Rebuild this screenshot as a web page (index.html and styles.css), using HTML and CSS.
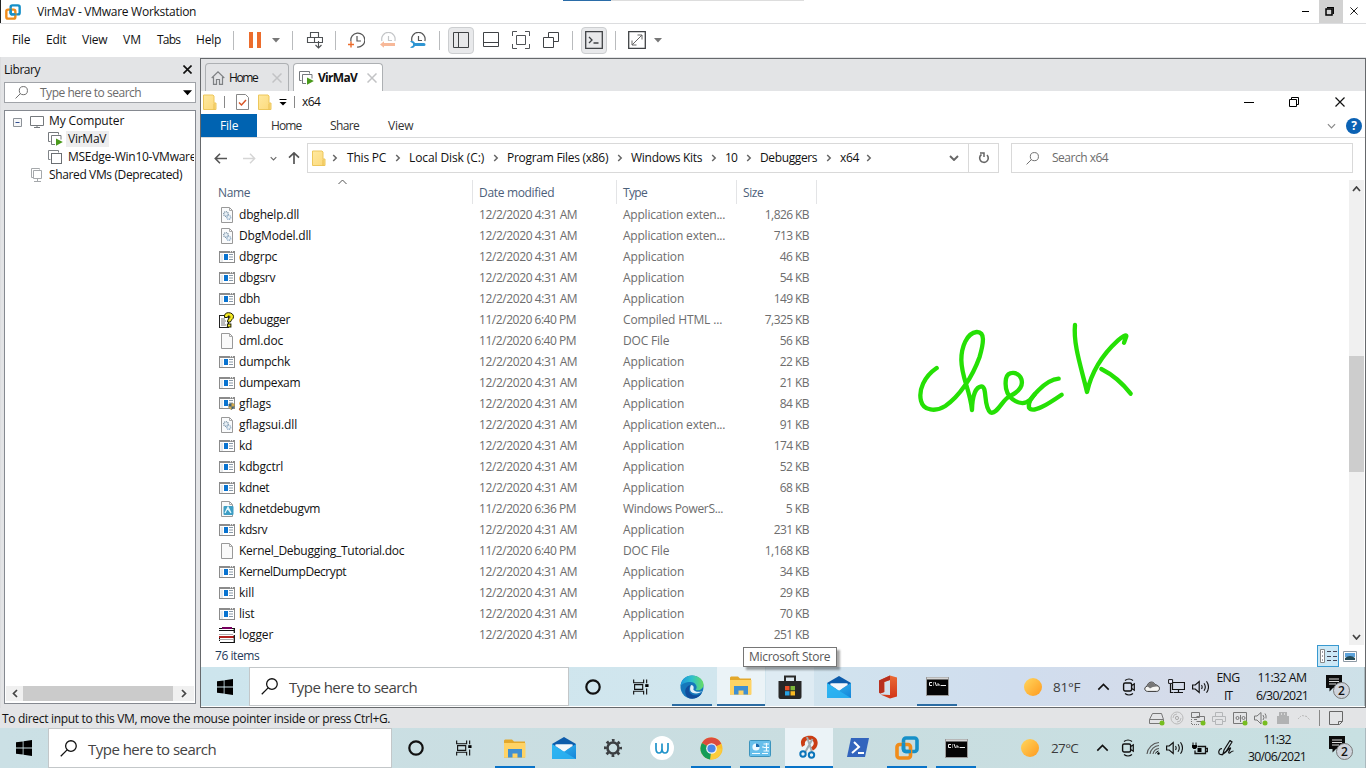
FILE: index.html
```html
<!DOCTYPE html>
<html lang="en">
<head>
<meta charset="utf-8">
<title>VirMaV - VMware Workstation</title>
<link rel="stylesheet" href="styles.css">
</head>
<body>
<svg class="sprite" width="0" height="0">
<defs>
<linearGradient id="gSun" x1="0" y1="0" x2="1" y2="1"><stop offset="0" stop-color="#ffd75e"/><stop offset="1" stop-color="#ff9a1f"/></linearGradient>
<linearGradient id="gFolder" x1="0" y1="0" x2="1" y2="1"><stop offset="0" stop-color="#ffe9a0"/><stop offset="1" stop-color="#fcd97a"/></linearGradient>
<linearGradient id="gEdge" x1="0" y1="0" x2="1" y2="0"><stop offset="0" stop-color="#1c95dc"/><stop offset=".5" stop-color="#2fc1c9"/><stop offset="1" stop-color="#68dd62"/></linearGradient>
<linearGradient id="gOff" x1="0" y1="0" x2="0" y2="1"><stop offset="0" stop-color="#ea6a35"/><stop offset="1" stop-color="#d23517"/></linearGradient>
<linearGradient id="gMail" x1="0" y1="0" x2="1" y2="1"><stop offset="0" stop-color="#34bff3"/><stop offset="1" stop-color="#1683d8"/></linearGradient>
</defs>
<symbol id="vmware" viewBox="0 0 24 24"><rect x="8.500" y="2" width="13.500" height="13.500" rx="2.500" fill="none" stroke="#1690c8" stroke-width="3.600"/><rect x="2" y="8.500" width="13.500" height="13.500" rx="2.500" fill="none" stroke="#f08c1a" stroke-width="3.600"/><path d="M8.500 7v6a2.500 2.500 0 0 0 2.500 2.500h5" fill="none" stroke="#1690c8" stroke-width="3.600"/></symbol>
<symbol id="caret" viewBox="0 0 8 5"><path d="M0 0h8L4 4.500z" fill="currentColor"/></symbol>
<symbol id="x" viewBox="0 0 10 10"><path d="M.5.5l9 9M9.500.5l-9 9" fill="none" stroke="currentColor" stroke-width="var(--s,1.200)"/></symbol>
<symbol id="chev" viewBox="0 0 6 8"><path d="M1.200 1l3 3-3 3" fill="none" stroke="#666" stroke-width="1.500"/></symbol>
<symbol id="down" viewBox="0 0 10 6"><path d="M1 1l4 4 4-4" fill="none" stroke="currentColor" stroke-width="var(--s,1.500)"/></symbol>
<symbol id="mag" viewBox="0 0 16 16"><circle cx="10.300" cy="5.700" r="5" fill="none" stroke="currentColor" stroke-width="1.200"/><path d="M6.700 9.300L.7 15.300" stroke="currentColor" stroke-width="1.200"/></symbol>
<symbol id="folder" viewBox="0 0 14 16"><path d="M.5 1h9.500l1 1v7h2v6.500H.5z" fill="url(#gFolder)" stroke="#edc75c"/><path d="M11 9.500v6" stroke="#e8bd4c"/></symbol>
<symbol id="vmstack" viewBox="0 0 15 14"><path d="M2.500 9.500h-2v-9h10v2" fill="none" stroke="#808488"/><rect x="3.500" y="3.500" width="10" height="10" fill="#fff" stroke="#6b6f73"/></symbol>
<symbol id="vmrun" viewBox="0 0 15 14"><path d="M2.500 9.500h-2v-9h10v2M7 12.500H3.500v-9h9.500v4" fill="none" stroke="#75797d"/><path d="M8 6.500l6.800 3.600L8 13.800z" fill="#4a9a1c"/></symbol>
<symbol id="clock" viewBox="0 0 17 17"><path d="M3 9.500A7 7 0 1 1 9 15" fill="none" stroke="currentColor" stroke-width="1.200"/><path d="M9 4v5h4" fill="none" stroke="currentColor" stroke-width="1.200"/></symbol>
<symbol id="halfclock" viewBox="0 0 17 17"><path d="M2 9A6.700 6.700 0 1 1 14.800 9" fill="none" stroke="currentColor" stroke-width="1.200"/><path d="M8.500 4v4.500h3.500" fill="none" stroke="currentColor" stroke-width="1.200"/></symbol>
<symbol id="dll" viewBox="0 0 12 16"><path d="M.5.5h8l3 3v12H.5z" fill="#fafbfc" stroke="#999"/><path d="M8.500.5v3h3" fill="none" stroke="#aaa"/><circle cx="5" cy="7" r="2.300" fill="#e8f0f6" stroke="#8298aa" stroke-width="1.300" stroke-dasharray="1 .6"/><circle cx="7.800" cy="10.300" r="2" fill="#e8f0f6" stroke="#8aa8c4" stroke-width="1.300" stroke-dasharray="1 .6"/></symbol>
<symbol id="doc" viewBox="0 0 12 16"><path d="M.5.5h8l3 3v12H.5z" fill="#fafafa" stroke="#999"/><path d="M8.500.5v3h3" fill="none" stroke="#aaa"/></symbol>
<symbol id="app" viewBox="0 0 16 12"><rect x=".5" y=".5" width="15" height="11" fill="#fff" stroke="#8b8b8b"/><path d="M0 1h16" stroke="#8b8b8b" stroke-width="2"/><path d="M11 .7h1m1 0h1" stroke="#fff"/><path d="M1.500 3h2.500v8H1.500z" fill="#e4e8eb"/><path d="M5 3h4v6H5z" fill="#0873d0"/><path d="M10 3.500h4M10 6h4M10 8.500h4" stroke="#8b9aa8"/></symbol>
<symbol id="flags" viewBox="0 0 16 13"><use href="#app" width="16" height="12"/><path d="M9.500 7l3-1 3 1v3l-3 3-3-2.500z" fill="#3f6276"/><path d="M12.500 6l3 1v2.500h-3zM9.500 9.500h3V13L10 11z" fill="#d6aa4c"/></symbol>
<symbol id="ps1" viewBox="0 0 14 16"><path d="M1.500.5h8l3 3v12h-11z" fill="#fafafa" stroke="#999"/><path d="M9.500.5v3h3" fill="none" stroke="#aaa"/><rect x="3.500" y="5" width="10" height="9" rx="1" fill="#3e9ec4"/><path d="M5 12l3-6 3 6M7 7l4 5" fill="none" stroke="#e3f8ff" stroke-width="1.200"/></symbol>
<symbol id="chm" viewBox="0 0 16 16"><rect x=".5" y="3.500" width="9" height="12" fill="#fff" stroke="#222"/><path d="M2 7h4M2 9h5M2 11h4M2 13h5" stroke="#777"/><path d="M5.500 5.500C5 2 7 .7 9.500.7c3 0 5 1.600 5 4 0 3-3 3-3 5.300H8.400c0-3.300 2.600-3.600 2.600-5 0-1.500-2.600-1.500-2.600.5z" fill="#f5ea24" stroke="#1c1c00"/><rect x="8.400" y="12" width="3.500" height="3" fill="#f5ea24" stroke="#1c1c00"/></symbol>
<symbol id="log" viewBox="0 0 16 16"><path d="M1 2h14v13H1z" fill="#fff"/><path d="M0 1.500h3M13 1.500h3M0 13.500h1M0 3.500h15M0 11.500h1M1 15.500h14" stroke="#111"/><path d="M3 1h10" stroke="#780060" stroke-width="2"/><path d="M0 10h15" stroke="#b3201c" stroke-width="2"/><path d="M15.300 1v5M15.300 8v8" stroke="#111" stroke-width="1.300"/><path d="M0 7.500h14M0 12.500h14" stroke="#aaa"/></symbol>
<symbol id="win" viewBox="0 0 16 16"><path d="M0 2.300l6.700-.9v6.200H0zM7.500 1.300L16 .1v7.500H7.500zM0 8.400h6.700v6.200L0 13.700zM7.500 8.400H16v7.500l-8.500-1.200z" fill="#000"/></symbol>
<symbol id="ring" viewBox="0 0 16 16"><circle cx="8" cy="8" r="6.700" fill="none" stroke="#111" stroke-width="2.200"/></symbol>
<symbol id="tview" viewBox="0 0 17 16"><path d="M.7 0v3.500h10.600V0M.7 16v-3.500h10.600V16M1.700 5.500h8.600v5H1.700zM14.500 0v4M14.500 9.500V16" fill="none" stroke="#111" stroke-width="1.200"/><path d="M13 5h3.500v3H13z"/></symbol>
<symbol id="edge" viewBox="0 0 24 24"><circle cx="12" cy="12" r="11.500" fill="#1677ba"/><path d="M.6 11C1 4.500 6 .5 12 .5c7 0 12 5 11.500 9.500-.4 4-4 6-8 5 3-3 0-8-5-8C5.500 7 2 9 .6 11z" fill="url(#gEdge)"/><path d="M11 10c-5 5 0 12 7 10 1.500-.5 3-1.200 3.800-2-3 5.500-9.500 6.500-13 5C3.500 20 4 11 11 10z" fill="#104d9c"/><path d="M11 10c3 0 3 3 2.300 4.500 1.500 2.500 6 3 9 1.500-3 3.500-11 3-12-.5-.5-2 0-4 .7-5.500z" fill="#e3f0f8"/></symbol>
<symbol id="explorer" viewBox="0 0 22 19"><path d="M0 1.500L1 .5h7l2 2h11v16H0z" fill="#e3a82b"/><path d="M0 4h21.500v14.500H0z" fill="#ffd364"/><path d="M4 18.500V10h14v8.500h-4.500v-4h-5v4z" fill="#3f8fd2"/></symbol>
<symbol id="store" viewBox="0 0 24 24"><path d="M7 7V1.500h10V7" fill="none" stroke="#2a2a2a" stroke-width="2"/><path d="M.5 6h23v16a2 2 0 0 1-2 2h-19a2 2 0 0 1-2-2z" fill="#272727"/><path d="M7 11h4.500v4.300H7z" fill="#e74f28"/><path d="M12.500 11H17v4.300h-4.500z" fill="#7db73a"/><path d="M7 16.200h4.500v4.300H7z" fill="#28a1e2"/><path d="M12.500 16.200H17v4.300h-4.500z" fill="#f8b923"/></symbol>
<symbol id="mail" viewBox="0 0 24 22"><path d="M0 7L12 0l12 7v6H0z" fill="#0d5cab"/><path d="M3 7.500h18L12 15z" fill="#f4f8fc"/><path d="M0 7l12 7.500L24 7v15H0z" fill="url(#gMail)"/><path d="M3 8.800L4.500 7.500h15L21 8.800l-9 5.700z" fill="#f4f8fc"/><path d="M0 22V7.500L24 22z" fill="#2db4f2" opacity=".8"/></symbol>
<symbol id="office" viewBox="0 0 20 24"><path d="M1 5.500L12 .5l7 2v19l-7 2L2.500 19.500 12 20V5L6.500 7v10L2.500 18.500 1 17z" fill="url(#gOff)"/><path d="M1 5.500L12 .5V5L6 7v10l-4 1.500-1-1z" fill="#b8301f"/></symbol>
<symbol id="cmd" viewBox="0 0 23 19"><rect x=".5" y=".5" width="22" height="18" fill="#050505" stroke="#999"/><path d="M1 1.500h21" stroke="#d5d5d5" stroke-width="2"/><path d="M6 5.500H3.500v3H6M7.500 5.500v1m0 1v1M9 5l1.500 4M12 9V6.500l2 2V9M15 8.500h5" fill="none" stroke="#eee"/></symbol>
<symbol id="sun" viewBox="0 0 18 18"><circle cx="9" cy="9" r="9" fill="url(#gSun)"/></symbol>
<symbol id="meet" viewBox="0 0 14 18"><path d="M3 2.500q4-3 8 0M3 15.500q4 3 8 0" fill="none" stroke="#111" stroke-width="1.200"/><rect x="1.600" y="5" width="8" height="8" rx="1.500" fill="none" stroke="#111" stroke-width="1.400"/><path d="M9.600 7.500l2.700-1.600v6.200l-2.700-1.600" fill="none" stroke="#111" stroke-width="1.200"/></symbol>
<symbol id="cloud" viewBox="0 0 16 11"><path d="M3.500 10.400C0 10 0 6 3 5.200 4 0 10 0 11 3.700c3 .3 5 2.300 4.300 4.700-.5 1.500-1.500 2-3 2z" fill="#f6f6f4" stroke="#333"/><path d="M1 6c2-1.500 4 0 5 1.500C8 6 12 5 14.500 6 14 4 12 3.800 11 3.700 9.500.5 4.500.5 3 5.200z" fill="#777"/></symbol>
<symbol id="net" viewBox="0 0 17 15"><path d="M4.500 3.500h12v7h-12zM10.500 10.500v3M6 13.500h9M2.500 5v8.500h3" fill="none" stroke="#111" stroke-width="1.200"/><path d="M.6.6h4v3.800h-4z" fill="#eef" stroke="#111"/></symbol>
<symbol id="vol" viewBox="0 0 17 14"><path d="M.6 5v4h2.600l4 3.500v-11L3.200 5z" fill="none" stroke="#111" stroke-width="1.200"/><path d="M9.500 5q1.300 2 0 4M12 3.200q2.600 3.800 0 7.600M14.500 1.200q4 5.800 0 11.600" fill="none" stroke="#111" stroke-width="1.100"/></symbol>
<symbol id="note" viewBox="0 0 24 24"><path d="M0 0h16v13H7l-3.500 3.500V13H0z" fill="#0b0b0b"/><path d="M3 4h10M3 6.500h10M3 9h7" stroke="#ddd"/><circle cx="15.500" cy="15.500" r="8" fill="#cfd4dc" stroke="#777"/></symbol>
<symbol id="gear" viewBox="0 0 20 20"><circle cx="10" cy="10" r="5.500" fill="none" stroke="#3c3f42" stroke-width="2.600"/><circle cx="10" cy="10" r="7.600" fill="none" stroke="#3c3f42" stroke-width="2.800" stroke-dasharray="2.700 3.270" stroke-dashoffset="1.350"/></symbol>
<symbol id="wcircle" viewBox="0 0 24 24"><circle cx="12" cy="12" r="12" fill="#fff"/><path d="M6 7v5.500Q6 17 9 17t3-4.500V7.500M12 12.500Q12 17 15 17t3-4.500V7" fill="none" stroke="#2093c9" stroke-width="1.700"/></symbol>
<symbol id="chrome" viewBox="0 0 24 24"><circle cx="12" cy="12" r="11.500" fill="#fbc02d"/><path d="M12 12L2 6.200A11.500 11.500 0 0 1 22.200 7z" fill="#dd4b3e"/><path d="M12 12L2 6.200A11.500 11.500 0 0 0 10.500 23.400L16 15z" fill="#159c58"/><path d="M12 12h10.800a11.500 11.500 0 0 1-12.300 11.400z" fill="#fbcc3c"/><circle cx="12" cy="12" r="5.600" fill="#f2f5f7"/><circle cx="12" cy="12" r="4.300" fill="#4a86e8"/></symbol>
<symbol id="panel" viewBox="0 0 22 17"><rect x=".5" y=".5" width="21" height="16" rx="1" fill="#67bfeb" stroke="#3c94bd"/><circle cx="7" cy="7" r="3.600" fill="#edf9ff"/><path d="M7 7V3.400A3.600 3.600 0 0 1 10.600 7z" fill="#176aaf"/><path d="M13 7h2M17.500 3v8M14.500 4H20M14.500 7.500H20M14.500 11H20M3 13.500h8M13 13.500h6" fill="none" stroke="#f3fcff" stroke-width="1.200"/></symbol>
<symbol id="snip" viewBox="0 0 20 24"><path d="M3 12C-1 3 7 0 12 .800c8 1 9 11 2 14.700l-2.500-3C15.500 11 16 6 12 5S5 6 6 10z" fill="#ca3d14"/><path d="M8 2l5 15M13.500 4L6 17.500" stroke="#a1abb0" stroke-width="2"/><circle cx="4" cy="19" r="2.700" fill="none" stroke="#0974ba" stroke-width="2"/><circle cx="12.500" cy="20" r="2.700" fill="none" stroke="#0974ba" stroke-width="2"/></symbol>
<symbol id="psh" viewBox="0 0 24 20"><path d="M5 0h18l-4 19H1z" fill="#3264bd"/><path d="M8 4l5 5-7 6M12 15h6" fill="none" stroke="#fff" stroke-width="2"/></symbol>
<symbol id="wifi" viewBox="0 0 15 14"><path d="M1 13A13 13 0 0 1 13 1.500M4 13a10 10 0 0 1 9-8.500M7 13a7 7 0 0 1 6-5.500" fill="none" stroke="#555" stroke-width="1.100"/><path d="M9.500 12.500a4 4 0 0 1 3-2.500" stroke="#111" fill="none"/><circle cx="12.500" cy="12.500" r="1.200"/></symbol>
<symbol id="batt" viewBox="0 0 17 13"><path d="M6.500 4.500h8v7H4v-3M15 6.500h1.500v3H15" fill="none" stroke="#111" stroke-width="1.300"/><path d="M6.500 6h4v4h-4zM1 3h5v2.500l-1.500 1.500h-2L1 5.500z"/><path d="M2 .5V3M5 .5V3" stroke="#111"/></symbol>
<symbol id="pen" viewBox="0 0 17 17"><path d="M6 10l6-9.500 2 1.500-6 9.500L5 14zM4 8.500C0 9 0 14 2.500 14.500 6 15.500 10 9 12 8s-2.500 4.500-1 5 1.500-2 4.500-2" fill="none" stroke="#111" stroke-width="1.200"/></symbol>
</svg>

<div class="desktop">
  <header class="titlebar">
    <svg class="i16"><use href="#vmware"/></svg><span data-w="159">VirMaV - VMware Workstation</span>
    <svg width="9" height="9"><path d="M1 4.500h7" stroke="#000"/></svg>
    <b class="restore"><svg width="9" height="9"><path d="M1 2h6v6H1z" fill="none" stroke="#000" stroke-width="1.500"/><path d="M2 .7h6.300V7" fill="none" stroke="#000" stroke-width="1.300"/></svg></b>
    <svg class="wx" width="8" height="8"><use href="#x"/></svg>
    <i class="topline"></i>
  </header>

  <nav class="menubar">
    <span data-w="18">File</span><span data-w="20">Edit</span><span data-w="25">View</span><span data-w="18">VM</span><span data-w="23">Tabs</span><span data-w="25">Help</span>
    <i class="sep"></i>
    <svg width="13" height="16"><path d="M1 0h4v16H1zM9 0h4v16H9z" fill="#ec6c2c"/></svg>
    <svg class="car"><use href="#caret"/></svg><i class="sep"></i>
    <svg width="17" height="17" viewBox="0 0 17 17"><path d="M4.500.5h8v5h-8zM1.500 5.500h7v5h-7zM8.500 5.500h8v5h-8zM12.500 9v7M9.500 13l3 3 3-3" fill="none" stroke="#4e5154" stroke-width="1.100"/></svg>
    <i class="sep"></i>
    <svg width="18" height="17" viewBox="0 0 18 17"><g color="#555"><use href="#clock" x="0" y="0" width="17" height="17"/></g><path d="M0 12.500h6M3 9.500v6" stroke="#ec6c2c" stroke-width="1.400"/></svg>
    <svg width="18" height="17" viewBox="0 0 18 17"><g color="#c4c6c8"><use href="#halfclock" x="0" y="0" width="17" height="17"/></g><path d="M0 12.500L4 9.200V11h11v3H4v1.800z" fill="#f7b898"/></svg>
    <svg width="18" height="17" viewBox="0 0 18 17"><g color="#555"><use href="#halfclock" x="0" y="0" width="17" height="17"/></g><path d="M0 9.500c3-1 4 0 5 1.500h9a1.500 1.500 0 0 1 0 3H5c-1 2-3 2.500-5 1.500l3-2v-2z" fill="#2f95d2"/></svg>
    <i class="sep"></i>
    <b class="pressed"><svg width="16" height="16"><path d="M.5.5h15v15H.5zM5.500.5v15" fill="none" stroke="#3f4245"/></svg></b>
    <svg width="16" height="16"><path d="M.5.5h15v14H.5zM.5 10.500h15" fill="none" stroke="#3f4245"/></svg>
    <svg width="18" height="18"><path d="M.5 5V.5H5M13 .5h4.500V5M17.500 13v4.500H13M5 17.500H.5V13M4.500 4.500h9v9h-9z" fill="none" stroke="#4f5255"/></svg>
    <svg width="16" height="16"><path d="M5.500 5.500v-5h10v9h-5M.5 5.500h10v10H.5z" fill="none" stroke="#3f4245"/></svg>
    <i class="sep"></i>
    <b class="pressed"><svg width="18" height="18"><path d="M.7.7h16.600v16.600H.7zM4 6l3 3-3 3M8.500 12h5" fill="none" stroke="#3f4245" stroke-width="1.300"/></svg></b>
    <i class="sep"></i>
    <svg width="18" height="18"><path d="M.7.7h16.600v16.600H.7z" fill="none" stroke="#3f4245" stroke-width="1.300"/><path d="M4 14l10-10M9.500 4H14v4.500M4 9.500V14h4.500" fill="none" stroke="#666"/></svg>
    <svg class="car"><use href="#caret"/></svg>
  </nav>

  <div class="work">
    <aside class="library">
      <div class="libhead"><span data-w="36">Library</span><svg width="9" height="9" style="--s:1.800"><use href="#x"/></svg></div>
      <div class="libsearch"><svg width="13" height="13"><use href="#mag"/></svg><span data-w="101">Type here to search</span><svg width="9" height="6"><use href="#caret"/></svg></div>
      <div class="tree">
        <div class="node root"><svg width="9" height="9"><path d="M.5.5h8v8h-8z" fill="#f6f7f8" stroke="#8d9298"/><path d="M2.500 4.500h4" stroke="#334f91"/></svg><svg width="14" height="12"><path d="M.5.5h13v9H.5zM4 11.500h6M7 9.500v2" fill="none" stroke="#75797d"/></svg><span data-w="75">My Computer</span></div>
        <div class="node vm"><svg width="15" height="14"><use href="#vmrun"/></svg><span class="sel"><span data-w="38">VirMaV</span></span></div>
        <div class="node vm"><svg width="15" height="14"><use href="#vmstack"/></svg><span data-w="128">MSEdge-Win10-VMware</span></div>
        <div class="node shared"><svg width="12" height="14"><path d="M2.500 9.500h-2v-9h8v1M2.500 2.500h8v8h-8zM6.500 10.500v3M3 13.500h7" fill="none" stroke="#a5a8ab"/></svg><span data-w="133">Shared VMs (Deprecated)</span></div>
        <div class="hscroll"><svg width="6" height="9"><path d="M5 1L1.500 4.500 5 8" fill="none" stroke="#444" stroke-width="1.700"/></svg><i></i><svg width="6" height="9"><path d="M1 1l3.500 3.500L1 8" fill="none" stroke="#444" stroke-width="1.700"/></svg></div>
      </div>
    </aside>

    <main class="stage">
      <div class="tabs">
        <div class="tab"><svg width="14" height="14"><path d="M.7 7L7 .9 13.300 7M2.500 6v7.300h3V8.500h3v4.800h3V6" fill="none" stroke="#7e8184" stroke-width="1.200"/></svg><span data-w="28">Home</span><svg width="10" height="10" style="--s:1.500"><use href="#x"/></svg></div>
        <div class="tab active"><svg width="15" height="14"><use href="#vmrun"/></svg><span data-w="39">VirMaV</span><svg width="10" height="10" style="--s:1.500"><use href="#x"/></svg></div>
      </div>

      <section class="explorer">
        <div class="extitle">
          <svg class="fold"><use href="#folder"/></svg><i class="bar"></i>
          <svg width="13" height="16"><path d="M.5.5h9l3 3v12H.5z" fill="#fff" stroke="#888"/><path d="M3 8.500l2.500 2.500L10 6" fill="none" stroke="#d95526" stroke-width="1.500"/></svg>
          <svg class="fold"><use href="#folder"/></svg>
          <svg width="8" height="7"><path d="M.5.5h7" stroke="#000"/><path d="M.5 3h7L4 6.500z"/></svg><i class="bar"></i><span data-w="18">x64</span>
          <svg width="10" height="10"><path d="M0 5.500h10" stroke="#000"/></svg>
          <svg width="10" height="10"><path d="M2.500 2.500v-2h7v7h-2M.5 2.500h7v7h-7z" fill="none" stroke="#000"/></svg>
          <svg width="10" height="10"><use href="#x"/></svg>
        </div>
        <div class="ribbon">
          <b class="file"><span data-w="18">File</span></b><span data-w="30">Home</span><span data-w="29">Share</span><span data-w="25">View</span>
          <svg width="9" height="6" style="--s:1.300"><use href="#down"/></svg><b class="help">?</b>
        </div>
        <div class="address">
          <svg width="13" height="11"><path d="M6 .8L1.300 5.500 6 10.200M1.300 5.500H13" fill="none" stroke="#555" stroke-width="1.600"/></svg>
          <svg width="13" height="11"><path d="M7 .8l4.700 4.700L7 10.200M0 5.500h11.700" fill="none" stroke="#d5d5d5" stroke-width="1.400"/></svg>
          <svg class="hist" width="7" height="5"><use href="#down"/></svg>
          <svg width="12" height="12"><path d="M1 5.700L6 .9l5 4.800M6 1v11" fill="none" stroke="#555" stroke-width="1.700"/></svg>
          <div class="path">
            <svg class="fold"><use href="#folder"/></svg><svg class="ch"><use href="#chev"/></svg>
            <span data-w="39">This PC</span><svg class="ch"><use href="#chev"/></svg><span data-w="75">Local Disk (C:)</span><svg class="ch"><use href="#chev"/></svg><span data-w="101">Program Files (x86)</span><svg class="ch"><use href="#chev"/></svg><span data-w="71">Windows Kits</span><svg class="ch"><use href="#chev"/></svg><span data-w="12">10</span><svg class="ch"><use href="#chev"/></svg><span data-w="57">Debuggers</span><svg class="ch"><use href="#chev"/></svg><span data-w="19">x64</span><svg class="ch"><use href="#chev"/></svg>
            <svg class="pd" width="10" height="6" style="--s:1.900"><use href="#down"/></svg>
          </div>
          <div class="refresh"><svg width="12" height="12" viewBox="0 0 12 12"><path d="M3.500 2.500A4.300 4.300 0 1 0 9 3" fill="none" stroke="#666" stroke-width="1.600"/><path d="M2 .9h4v4" fill="none" stroke="#666" stroke-width="1.500"/></svg></div>
          <div class="exsearch"><svg width="13" height="13"><use href="#mag"/></svg><span data-w="56">Search x64</span></div>
        </div>
        <div class="listing">
          <div class="list">
            <div class="cols"><div><span data-w="32">Name</span><svg class="sort" width="9" height="6"><path d="M.5 5l4-4 4 4" fill="none" stroke="#555"/></svg></div><div><span data-w="75">Date modified</span></div><div><span data-w="24">Type</span></div><div><span data-w="20">Size</span></div></div>
            <div id="rows"></div>
          </div>
          <div class="vscroll"><svg width="9" height="6"><path d="M1 5l3.500-4L8 5" fill="none" stroke="#444" stroke-width="1.700"/></svg><i></i><svg width="9" height="6"><path d="M1 1l3.500 4L8 1" fill="none" stroke="#444" stroke-width="1.700"/></svg></div>
        </div>
        <div class="exstatus"><span data-w="44">76 items</span>
          <b class="viewbtn"><svg width="17" height="14"><path d="M.5.5h4v13h-4z" fill="#fff" stroke="#888"/><path d="M2 3h1M2 7h1M2 11h1M7 2.500h4M13 2.500h4M7 7.500h4M13 7.500h4M7 11.500h4M13 11.500h4" stroke="#445"/></svg></b>
          <svg width="14" height="11"><path d="M.5.5h13v10H.5z" fill="#fff" stroke="#8d9aa5"/><path d="M2 2h10v4H2z" fill="#5ba3dc"/><path d="M2 7q5-4 10 0v2H2z" fill="#244b57"/></svg>
        </div>
        <svg class="ink" width="250" height="120" viewBox="0 0 750 360"><g fill="none" stroke="#25e005" stroke-width="13" stroke-linecap="round" stroke-linejoin="round"><path d="M110 174C72 200 55 240 63 272C70 303 108 306 136 288C177 260 216 204 239 140C251 98 256 65 230 66C200 69 184 112 184 150C185 205 209 235 216 300C217 255 228 231 244 229C263 229 249 289 271 307C290 316 309 267 327 260C352 248 372 232 364 207C355 184 324 182 318 206C314 232 319 253 338 268C354 280 374 284 390 270L404 253"/><path d="M476 206C438 209 380 268 387 293C398 312 444 282 485 254"/><path d="M525 45C519 105 546 180 561 246C575 184 608 133 654 91C665 81 680 72 679 79L672 98M604 177C638 194 671 224 692 251"/></g></svg>
      </section>

      <div class="taskbar guest">
        <b class="start"><svg class="i16"><use href="#win"/></svg></b>
        <div class="tsearch"><svg width="17" height="17"><use href="#mag"/></svg><span data-w="128">Type here to search</span></div>
        <b class="t"><svg class="i16"><use href="#ring"/></svg></b><b class="t tv"><svg class="i16"><use href="#tview"/></svg></b>
        <b class="t run"><svg width="24" height="24"><use href="#edge"/></svg></b><b class="t on full"><svg width="22" height="19"><use href="#explorer"/></svg></b><b class="t hov"><svg width="24" height="24"><use href="#store"/></svg></b><b class="t"><svg width="24" height="22"><use href="#mail"/></svg></b><b class="t"><svg width="20" height="24"><use href="#office"/></svg></b><b class="t run"><svg width="23" height="19"><use href="#cmd"/></svg></b>
        <div class="tray gt">
          <svg width="18" height="18"><use href="#sun"/></svg><span data-w="27">81°F</span><svg class="up" width="13" height="8"><use href="#down"/></svg><svg width="14" height="18"><use href="#meet"/></svg><svg width="16" height="11"><use href="#cloud"/></svg><svg width="17" height="15"><use href="#net"/></svg><svg width="17" height="14"><use href="#vol"/></svg>
          <div class="two lang"><span data-w="23">ENG</span><span data-w="8">IT</span></div><div class="two"><span data-w="49">11:32 AM</span><span data-w="52">6/30/2021</span></div><div class="notif"><svg width="24" height="24"><use href="#note"/></svg><em>2</em></div><i></i>
        </div>
        <div class="tooltip"><span data-w="81">Microsoft Store</span></div>
      </div>
    </main>
  </div>

  <div class="vmstatus">
    <span data-w="388">To direct input to this VM, move the mouse pointer inside or press Ctrl+G.</span>
    <svg width="16" height="15"><path d="M3.500 2.500h9l2 6v4H.5v-4zM.5 8.500h14" fill="none" stroke="#777"/><circle cx="13" cy="12" r="2.500" fill="#77bd20"/></svg>
    <svg width="16" height="15"><circle cx="7" cy="7" r="6" fill="none" stroke="#bbb"/><circle cx="7" cy="7" r="1.600" fill="none" stroke="#aaa"/><path d="M3 7a4 4 0 0 1 4-4M11 7a4 4 0 0 1-4 4" fill="none" stroke="#bbb"/></svg>
    <svg width="16" height="15"><path d="M.5 1.500h8v5h-8zM5.500 5.500h8v5h-8M3 8.500h3" fill="none" stroke="#777"/><path d="M.5 8v5.500H9" fill="none" stroke="#777" stroke-dasharray="1 1"/><circle cx="12" cy="12" r="2.500" fill="#77bd20"/></svg>
    <svg width="16" height="15"><path d="M3.500 5V1.500h7V5M3 10.500H.5v-5h13v5H11M3.500 8.500h7v5h-7z" fill="none" stroke="#b4b6b8"/></svg>
    <svg width="16" height="15"><path d="M.5 1.500h13v11H.5zM7.500 4v7" fill="none" stroke="#777"/><circle cx="4.500" cy="7" r="1.500" fill="none" stroke="#777"/><circle cx="10.500" cy="7" r="1.500" fill="none" stroke="#777"/><circle cx="12" cy="12" r="2.500" fill="#77bd20"/></svg>
    <svg width="16" height="15"><path d="M.5 5v4H3l4 4V1.500L3 5zM9 4q2 3 0 5M11 2.500q1.500 2 1 5" fill="none" stroke="#777"/><circle cx="11" cy="12" r="2.500" fill="#77bd20"/></svg>
    <svg width="16" height="15"><path d="M3 1h8v4h2v8H1V5h2z" fill="#b1b2b3"/><path d="M5 3h1M8 3h1" stroke="#fff"/></svg>
    <svg width="16" height="15"><path d="M1 8l3-3M5 4.500l5 1M9 5l4 4" fill="none" stroke="#bbb" stroke-dasharray="2 1"/></svg>
    <i></i><svg width="16" height="15"><path d="M.5.5h13v10l-3 3H.5zM13.500 10.500h-4v3" fill="none" stroke="#666"/></svg>
  </div>

  <div class="taskbar host">
    <b class="start"><svg class="i16"><use href="#win"/></svg></b>
    <div class="tsearch"><svg width="17" height="17"><use href="#mag"/></svg><span data-w="128">Type here to search</span></div>
    <b class="t"><svg class="i16"><use href="#ring"/></svg></b><b class="t tv"><svg class="i16"><use href="#tview"/></svg></b><b class="t run"><svg width="22" height="19"><use href="#explorer"/></svg></b><b class="t"><svg width="24" height="22"><use href="#mail"/></svg></b><b class="t"><svg width="20" height="20"><use href="#gear"/></svg></b><b class="t"><svg width="24" height="24"><use href="#wcircle"/></svg></b><b class="t run"><svg width="23" height="23"><use href="#chrome"/></svg></b><b class="t run"><svg width="22" height="17"><use href="#panel"/></svg></b><b class="t on full"><svg width="20" height="24"><use href="#snip"/></svg></b><b class="t"><svg width="24" height="20"><use href="#psh"/></svg></b><b class="t run"><svg width="24" height="24"><use href="#vmware"/></svg></b><b class="t run last"><svg width="23" height="19"><use href="#cmd"/></svg></b>
    <div class="tray ht">
      <svg width="18" height="18"><use href="#sun"/></svg><span data-w="27">27°C</span><svg class="up" width="13" height="8"><use href="#down"/></svg><svg width="14" height="18"><use href="#meet"/></svg><svg width="15" height="14"><use href="#wifi"/></svg><svg width="17" height="14"><use href="#vol"/></svg><svg width="17" height="13"><use href="#batt"/></svg><svg width="17" height="17"><use href="#pen"/></svg>
      <div class="two"><span data-w="27">11:32</span><span data-w="58">30/06/2021</span></div><div class="notif"><svg width="24" height="24"><use href="#note"/></svg><em>2</em></div><i></i>
    </div>
  </div>
</div>
<script src="app.js"></script>
</body>
</html>
```
FILE: styles.css
```css
* { box-sizing: border-box; }
body { margin: 0; width: 1366px; height: 768px; overflow: hidden; font-family: "Open Sans", "Noto Sans", sans-serif; font-size: 12px; font-stretch: 88%; line-height: 16px; color: #111; }
b, i, em { display: block; font-style: normal; font-weight: 400; }
svg { display: block; flex: none; }
[data-w] { display: inline-block; white-space: nowrap; }
.sprite { position: absolute; }
.i16 { width: 16px; height: 16px; }
.desktop { display: grid; grid-template-rows: 24px 33px 651px 20px 40px; width: 1366px; height: 768px; background: #e3e4e6; }

.titlebar { position: relative; display: grid; grid-template-columns: 32px 1264px 18px 24px 1fr; align-items: center; padding-left: 5px; background: #fff; border-bottom: 1px solid #dcdddf; box-shadow: inset 1px 0 #222; }
.restore { height: 23px; padding: 7px 0 0 6px; background: #d2d2d2; }
.wx { margin-left: 7px; margin-bottom: 2px; }
.topline { position: absolute; left: 563px; top: 0; width: 241px; height: 1px; background: linear-gradient(90deg, #2a6ca8 48px, #ddd 48px); }

.menubar { display: grid; grid-template-columns: 34px 36px 41px 34px 39px 37px 15px 24px 20px 14px 29px 13px 32px 30px 29px 9px 35px 29px 31px 29px 9px 34px 13px 26px 1fr; align-items: center; padding-left: 12px; padding-bottom: 1px; background: #fff; }
.sep { width: 1px; height: 19px; background: #b9bbbd; }
.car { width: 8px; height: 5px; color: #777; }
.pressed { display: flex; align-items: center; justify-content: center; width: 26px; height: 27px; border: 1px solid #ccced0; border-radius: 4px; background: #e8e9eb; }

.work { display: grid; grid-template-columns: 200px 1166px; }
.library { padding: 0 4px; display: flex; flex-direction: column; border-left: 1px solid #dcdddf; padding-left: 3px; }
.libhead { height: 25px; display: flex; align-items: center; justify-content: space-between; padding-right: 4px; }
.libsearch { display: grid; grid-template-columns: 25px 143px 10px; align-items: center; padding-left: 10px; height: 21px; background: #fff; border: 1px solid #a0a3a8; color: #6b6b6b; }
.libsearch svg:last-child { color: #000; }
.tree { margin-top: 7px; height: 594px; border: 1px solid #858990; background: #fff; padding: 1px 1px 2px; display: flex; flex-direction: column; overflow: hidden; }
.node { height: 18px; display: grid; align-items: center; overflow: hidden; }
.root { grid-template-columns: 17px 19px 1fr; padding-left: 7px; }
.root svg { margin-top: 2px; }
.vm { grid-template-columns: 20px 1fr; padding-left: 42px; }
.shared { grid-template-columns: 18px 1fr; padding-left: 25px; }
.sel { width: 43px; margin-left: -2px; padding-left: 2px; background: #ededee; }
.hscroll { margin-top: auto; height: 15px; display: grid; grid-template-columns: 17px 150px 21px; align-items: center; justify-content: center; justify-items: center; background: #f0f0f0; }
.hscroll i { width: 150px; height: 15px; background: #cbcbcb; }

.stage { margin-top: 1px; height: 650px; border: 1px solid #66696c; display: grid; grid-template-rows: 32px 576px 40px; background: #fff; }
.tabs { display: flex; align-items: flex-end; gap: 4px; padding-left: 4px; background: #e3e4e6; }
.tab { width: 84px; height: 28px; display: grid; grid-template-columns: 18px 43px 1fr; align-items: center; padding-left: 5px; border: 1px solid #adb0b3; border-bottom: 0; border-radius: 4px 4px 0 0; }
.tab svg:last-child { color: #c2c3c5; }
.tab.active { width: 90px; grid-template-columns: 19px 49px 1fr; background: #fff; font-weight: 700; }

.explorer { position: relative; display: grid; grid-template-rows: 23px 24px 42px 465px 22px; background: #fff; }
.fold { width: 14px; height: 16px; }
.extitle { display: grid; grid-template-columns: 21px 12px 22px 21px 15px 8px 942px 45px 46px 1fr; align-items: center; padding-left: 2px; padding-bottom: 1px; }
.bar { width: 1px; height: 12px; background: #888; }
.ribbon { display: grid; grid-template-columns: 70px 59px 58px 939px 19px 1fr; align-items: center; border-bottom: 1px solid #d9dadb; color: #333; }
.file { width: 56px; height: 23px; padding: 4px 0 0 19px; background: #0063b1; color: #fff; }
.ribbon svg { color: #888; }
.help { width: 16px; height: 16px; border-radius: 8px; background: #0b62b4; color: #fff; font-weight: 700; font-size: 12px; text-align: center; }
.address { display: grid; grid-template-columns: 29px 27px 18px 19px 662px 42px 342px; align-items: center; padding-left: 13px; padding-bottom: 2px; }
.hist, .pd { color: #666; }
.path { height: 30px; display: grid; grid-template-columns: 21px 14px 49px 13px 85px 13px 111px 13px 81px 13px 22px 13px 67px 13px 27px 82px 1fr; align-items: center; padding-left: 4px; border: 1px solid #d9d9d9; }
.ch { width: 6px; height: 8px; margin-left: -1px; }
.refresh { width: 31px; height: 30px; display: flex; align-items: center; justify-content: center; margin-left: -1px; border: 1px solid #d9d9d9; }
.exsearch { height: 30px; display: grid; grid-template-columns: 26px 1fr; align-items: center; padding-left: 14px; border: 1px solid #d9d9d9; color: #6d6d6d; }
.listing { display: grid; grid-template-columns: 1148px 15px; height: 465px; }
.cols { height: 24px; display: grid; grid-template-columns: 255px 144px 120px 80px; padding-left: 17px; color: #4c607a; }
.cols > div { position: relative; padding: 5px 0 0 6px; border-right: 1px solid #e3e4e6; }
.cols > div:first-child { padding-left: 0; }
.sort { position: absolute; left: 120px; top: -1px; }
.row { height: 21px; display: grid; grid-template-columns: 21px 240px 144px 110px 76px; align-items: center; padding-left: 17px; color: #6d6d6d; }
.row .name { color: #111; }
.row .size { text-align: right; }
.row .ic { justify-self: center; margin-right: 3px; }
.vscroll { display: grid; grid-template-rows: 17px 159px 1fr 17px; justify-items: center; align-items: center; background: #f0f0f0; }
.vscroll i { grid-row: 3; align-self: start; width: 15px; height: 116px; background: #cdcdcd; }
.vscroll svg:last-child { grid-row: 4; }
.exstatus { display: grid; grid-template-columns: 1102px 26px 1fr; align-items: center; padding-left: 14px; color: #1e395b; }
.viewbtn { width: 22px; height: 22px; display: flex; align-items: center; justify-content: center; border: 1px solid #3899d0; background: #cce8f6; }
.ink { position: absolute; left: 699px; top: 219px; }

.taskbar { position: relative; display: flex; }
.guest { height: 39px; background: linear-gradient(90deg, #cde5ed 0, #d1e6ee 45%, #d0ddee 70%, #d5dbe9 85%, #cde1e8 100%); --line: #2b6ca3; }
.host { height: 40px; background: linear-gradient(90deg, #cbe0e5, #c9dde0 60%, #c8e0e2); --line: #0873c8; }
.start { width: 48px; display: flex; align-items: center; justify-content: center; }
.tsearch { width: 320px; display: grid; grid-template-columns: 28px 1fr; align-items: center; padding-left: 11px; background: #fff; border: 1px solid #c3c7c9; font-size: 15px; color: #444; }
.tsearch svg { color: #111; }
.tsearch span { padding-top: 1px; }
.host .tsearch { width: 344px; }
.t { position: relative; width: 48px; margin-right: 1px; display: flex; align-items: center; justify-content: center; }
.tsearch + .t { margin-right: 0; }
.tv { margin-right: 3px; }
.host .tv svg { margin-left: -1px; }
.on { background: #ebf3f7; }
.hov { background: #deebf3; }
.run { background: linear-gradient(var(--line), var(--line)) 4px 100% / 40px 2px no-repeat; }
.full { border-bottom: 2px solid var(--line); }
.tray { position: absolute; top: 0; height: 100%; display: grid; align-items: center; }
.tray > span { font-size: 13.500px; color: #3b3b3b; }
.gt { left: 823px; grid-template-columns: 29px 44px 25px 22px 24px 24px 21px 43px 70px 38px 3px; }
.ht { left: 1021px; grid-template-columns: 30px 45px 25px 25px 20px 25px 27px 25px 86px 36px 3px; }
.up { transform: scaleY(-1); --s: 1.200; color: #111; }
.tray > i { height: 100%; border-left: 1px solid #aab9be; }
.two { display: flex; flex-direction: column; align-items: center; line-height: 17.500px; font-size: 12.300px; width: 52px; }
.lang { width: 30px; }
.ht .two { width: 58px; margin-left: 5px; }
.notif { position: relative; }
.notif em { position: absolute; left: 12px; top: 8px; font-weight: 600; font-size: 12px; line-height: 15px; }
.tooltip { position: absolute; left: 542px; top: -20px; width: 94px; height: 20px; padding: 1px 0 0 5px; border: 1px solid #767676; background: #fff; color: #575757; box-shadow: 3px 3px 2px rgba(0,0,0,.35); }

.vmstatus { display: grid; grid-template-columns: 1147px repeat(8, 21.100px) 11px 20px; align-items: center; padding-left: 2px; }
.vmstatus i { width: 1px; height: 16px; margin-left: 1px; background: #888; }
.vmstatus span { margin-top: 1px; }
```
FILE: app.js
```javascript
// name, name width, icon, date, type, size
const A = "Application", E = "Application exten...", D = "12/2/2020 4:31 AM", N = "11/2/2020 6:40 PM";
const files = [
  ["dbghelp.dll", 60, "dll", D, E, "1,826 KB"],
  ["DbgModel.dll", 72, "dll", D, E, "713 KB"],
  ["dbgrpc", 38, "app", D, A, "46 KB"],
  ["dbgsrv", 36, "app", D, A, "54 KB"],
  ["dbh", 21, "app", D, A, "149 KB"],
  ["debugger", 51, "chm", N, "Compiled HTML ...", "7,325 KB"],
  ["dml.doc", 44, "doc", N, "DOC File", "56 KB"],
  ["dumpchk", 51, "app", D, A, "22 KB"],
  ["dumpexam", 61, "app", D, A, "21 KB"],
  ["gflags", 32, "flags", D, A, "84 KB"],
  ["gflagsui.dll", 58, "dll", D, E, "91 KB"],
  ["kd", 13, "app", D, A, "174 KB"],
  ["kdbgctrl", 44, "app", D, A, "52 KB"],
  ["kdnet", 30, "app", D, A, "68 KB"],
  ["kdnetdebugvm", 81, "ps1", "11/2/2020 6:36 PM", "Windows PowerS...", "5 KB"],
  ["kdsrv", 28, "app", D, A, "231 KB"],
  ["Kernel_Debugging_Tutorial.doc", 165, "doc", N, "DOC File", "1,168 KB"],
  ["KernelDumpDecrypt", 107, "app", D, A, "34 KB"],
  ["kill", 15, "app", D, A, "29 KB"],
  ["list", 15, "app", D, A, "70 KB"],
  ["logger", 34, "log", D, A, "251 KB"]
];
const iconSize = { dll: [12, 16], doc: [12, 16], app: [16, 12], flags: [16, 13], ps1: [14, 16], chm: [16, 16], log: [16, 16] };
const typeWidth = { [A]: 61, [E]: 102, "Compiled HTML ...": 99, "DOC File": 46, "Windows PowerS...": 100 };
const sizeWidth = { 8: 44, 6: 35, 5: 29, 4: 23 };
document.getElementById("rows").innerHTML = files.map(([name, w, icon, date, type, size]) => {
  const [iw, ih] = iconSize[icon];
  return `<div class="row"><svg class="ic" width="${iw}" height="${ih}"><use href="#${icon}"/></svg>` +
    `<div class="name"><span data-w="${w}">${name}</span></div><div><span data-w="${date === D ? 98 : 97}">${date}</span></div>` +
    `<div><span data-w="${typeWidth[type]}">${type}</span></div><div class="size"><span data-w="${sizeWidth[size.length]}">${size}</span></div></div>`;
}).join("");

// Tighten or loosen tracking so each label takes its nominal width.
document.querySelectorAll("[data-w]").forEach(el => {
  const r = document.createRange();
  r.selectNodeContents(el);
  const natural = r.getBoundingClientRect().width;
  const n = el.textContent.length;
  el.style.letterSpacing = ((Number(el.dataset.w) + 0.2 - natural) / n).toFixed(3) + "px";
});
```
